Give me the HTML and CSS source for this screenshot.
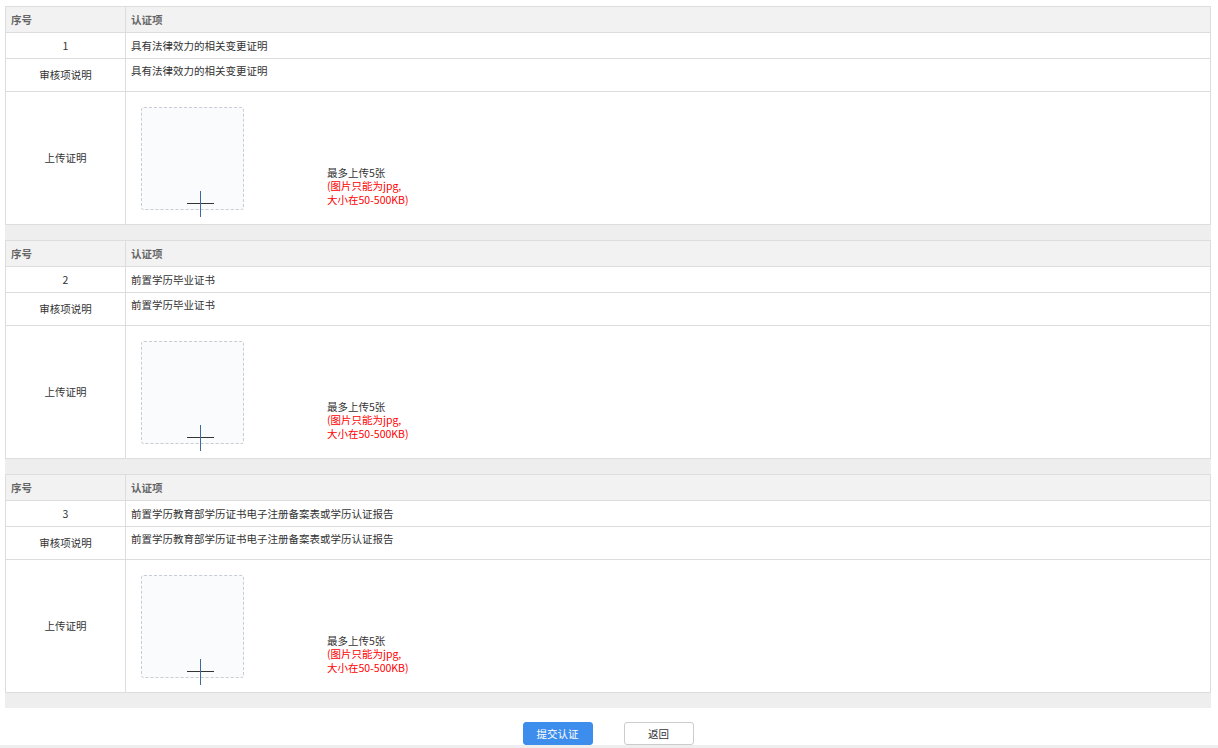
FILE: index.html
```html
<!DOCTYPE html>
<html lang="zh-CN">
<head>
  <meta charset="UTF-8">
  <meta name="viewport" content="width=device-width, initial-scale=1.0">
  <link rel="stylesheet" href="styles.css">
</head>
<body>

  <div class="page">

    <div class="block">
      <table class="cert">
        <tr class="head">
          <th class="col-no">序号</th>
          <th>认证项</th>
        </tr>
        <tr class="row-item">
          <td class="center">1</td>
          <td>具有法律效力的相关变更证明</td>
        </tr>
        <tr class="row-desc">
          <td class="center">审核项说明</td>
          <td class="top">具有法律效力的相关变更证明</td>
        </tr>
        <tr class="row-upload">
          <td class="center">上传证明</td>
          <td>
            <div class="upload">
              <div class="upload-box"><span class="plus"></span></div>
              <div class="upload-tip">
                <div class="tip-main">最多上传5张</div>
                <div class="tip-red">(图片只能为jpg,<br>大小在50-500KB)</div>
              </div>
            </div>
          </td>
        </tr>
      </table>
      <div class="gap"></div>
    </div>

    <div class="block">
      <table class="cert">
        <tr class="head">
          <th class="col-no">序号</th>
          <th>认证项</th>
        </tr>
        <tr class="row-item">
          <td class="center">2</td>
          <td>前置学历毕业证书</td>
        </tr>
        <tr class="row-desc">
          <td class="center">审核项说明</td>
          <td class="top">前置学历毕业证书</td>
        </tr>
        <tr class="row-upload">
          <td class="center">上传证明</td>
          <td>
            <div class="upload">
              <div class="upload-box"><span class="plus"></span></div>
              <div class="upload-tip">
                <div class="tip-main">最多上传5张</div>
                <div class="tip-red">(图片只能为jpg,<br>大小在50-500KB)</div>
              </div>
            </div>
          </td>
        </tr>
      </table>
      <div class="gap"></div>
    </div>

    <div class="block">
      <table class="cert">
        <tr class="head">
          <th class="col-no">序号</th>
          <th>认证项</th>
        </tr>
        <tr class="row-item">
          <td class="center">3</td>
          <td>前置学历教育部学历证书电子注册备案表或学历认证报告</td>
        </tr>
        <tr class="row-desc">
          <td class="center">审核项说明</td>
          <td class="top">前置学历教育部学历证书电子注册备案表或学历认证报告</td>
        </tr>
        <tr class="row-upload">
          <td class="center">上传证明</td>
          <td>
            <div class="upload">
              <div class="upload-box"><span class="plus"></span></div>
              <div class="upload-tip">
                <div class="tip-main">最多上传5张</div>
                <div class="tip-red">(图片只能为jpg,<br>大小在50-500KB)</div>
              </div>
            </div>
          </td>
        </tr>
      </table>
      <div class="gap"></div>
    </div>

    <div class="buttons">
      <button class="btn btn-primary">提交认证</button>
      <button class="btn btn-default">返回</button>
    </div>
  </div>

  <div class="footer-strip"></div>

</body>
</html>
```

FILE: styles.css
```css
* {
  margin: 0;
  padding: 0;
  box-sizing: border-box;
}

body {
  font-family: "Noto Sans CJK SC", "Microsoft YaHei", sans-serif;
  font-size: 10.5px;
  color: #333;
  background-color: #fff;
}

.page {
  padding: 6px 7px 0 5px;
}

.cert {
  width: 100%;
  border-collapse: collapse;
  table-layout: fixed;
  border: 1px solid #ddd;
}

.cert th,
.cert td {
  border: 1px solid #ddd;
  padding: 0 5px;
  text-align: left;
  vertical-align: middle;
  line-height: 14px;
}

.cert .col-no {
  width: 120px;
}

.cert th {
  background-color: #f2f2f2;
  color: #666;
  font-weight: bold;
  height: 26px;
}

.row-item td {
  height: 26px;
}

.row-desc td {
  height: 33px;
}

.row-upload td {
  height: 133px;
}

.cert td.center {
  text-align: center;
}

.cert td.top {
  vertical-align: top;
  padding-top: 5px;
}

.upload {
  display: flex;
  align-items: flex-end;
  padding: 0 0 0 10px;
}

.upload-box {
  position: relative;
  width: 103px;
  height: 103px;
  border: 1px dashed #c8ccd3;
  border-radius: 3px;
  background-color: #fafbfd;
}

.plus {
  position: absolute;
  left: 45px;
  top: 83px;
  width: 27px;
  height: 26px;
}

.plus::before,
.plus::after {
  content: "";
  position: absolute;
  background-color: #333;
}

.plus::before {
  left: 0;
  top: 12px;
  width: 27px;
  height: 1px;
}

.plus::after {
  left: 13px;
  top: 0;
  width: 1px;
  height: 26px;
  background-color: #3d6a9a;
}

.upload-tip {
  margin-left: 83px;
  margin-bottom: 3px;
}

.tip-main {
  line-height: 12px;
  color: #333;
}

.tip-red {
  line-height: 14px;
  color: #f00;
}

.gap {
  height: 15px;
  background-color: #eee;
}

.buttons {
  display: flex;
  justify-content: center;
  gap: 31px;
  padding-top: 14px;
}

.btn {
  width: 70px;
  height: 23px;
  border-radius: 3px;
  font-family: inherit;
  font-size: 10.5px;
  cursor: pointer;
}

.btn-primary {
  border: 1px solid #3d8dec;
  background-color: #3d8dec;
  color: #fff;
}

.btn-default {
  border: 1px solid #ccc;
  background-color: #fff;
  color: #333;
}

.footer-strip {
  height: 10px;
  background-color: #eee;
}
```
